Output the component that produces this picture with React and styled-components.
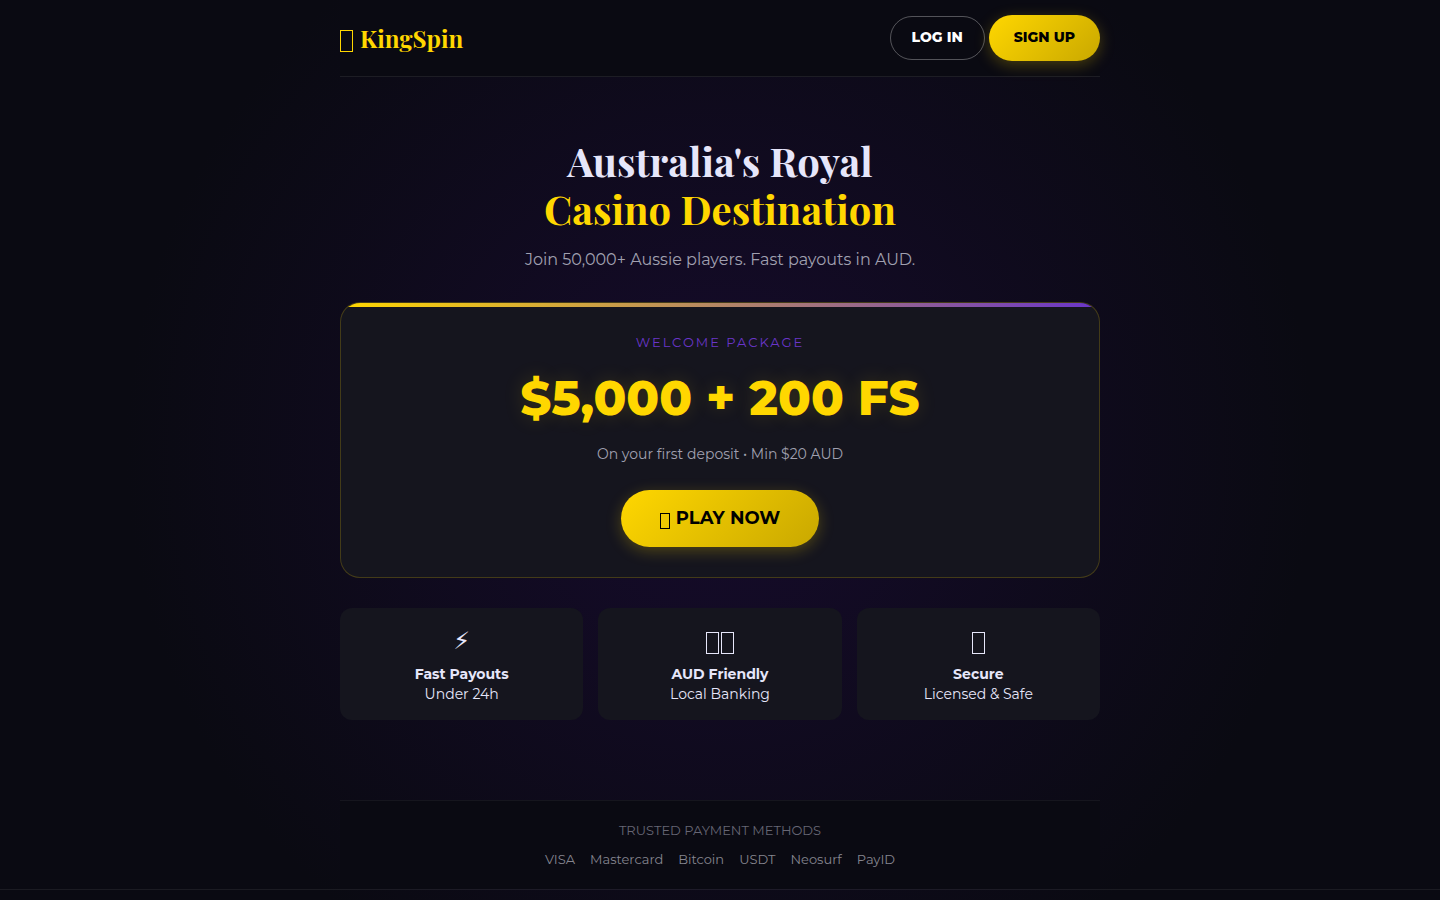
import React from "react";
import styled, { createGlobalStyle } from "styled-components";

const features = [
  { boxes: 0, title: "Fast Payouts", text: "Under 24h" },
  { boxes: 2, title: "AUD Friendly", text: "Local Banking" },
  { boxes: 1, title: "Secure", text: "Licensed & Safe" },
];

const payments = ["VISA", "Mastercard", "Bitcoin", "USDT", "Neosurf", "PayID"];

export default function App() {
  return (
    <>
      <GlobalStyle />
      <Page>
        <Container>
          <Header>
            <Logo href="#">
              <Box />
              KingSpin
            </Logo>
            <Actions>
              <Button $outline>Log in</Button>
              <Button>Sign up</Button>
            </Actions>
          </Header>
          <Hero>
            <h1>
              Australia's Royal
              <br />
              <span>Casino Destination</span>
            </h1>
            <p>Join 50,000+ Aussie players. Fast payouts in AUD.</p>
            <BonusCard>
              <div className="label">Welcome Package</div>
              <div className="amount">$5,000 + 200 FS</div>
              <div className="terms">On your first deposit • Min $20 AUD</div>
              <Button $large>
                <Box $small />
                Play now
              </Button>
            </BonusCard>
            <Features>
              {features.map((feature) => (
                <Feature key={feature.title}>
                  <div className="icon">
                    {feature.boxes === 0 && "⚡\uFE0E"}
                    {feature.boxes > 0 && <Box />}
                    {feature.boxes > 1 && <Box />}
                  </div>
                  <strong>{feature.title}</strong>
                  <span>{feature.text}</span>
                </Feature>
              ))}
            </Features>
          </Hero>
          <Payments>
            <h2>Trusted payment methods</h2>
            <ul>
              {payments.map((name) => (
                <li key={name}>{name}</li>
              ))}
            </ul>
          </Payments>
        </Container>
        <Footer />
      </Page>
    </>
  );
}

const GlobalStyle = createGlobalStyle`
  * {
    box-sizing: border-box;
    margin: 0;
    padding: 0;
  }
  body {
    background-color: #0a0a12;
    color: #e6e6fa;
    font-family: Montserrat, "Open Sans", sans-serif;
    font-size: 16px;
    line-height: 26px;
  }
`;

const Page = styled.div`
  min-height: 100vh;
  background: radial-gradient(circle at center, #160b2c 0%, #0a0a12 70%);
`;

const Container = styled.div`
  max-width: 800px;
  margin: 0 auto;
  padding: 0 20px;
`;

const Header = styled.header`
  display: flex;
  justify-content: space-between;
  align-items: center;
  padding: 15px 0;
  border-bottom: 1px solid rgba(255, 255, 255, 0.08);
  background: #0a0a12;
`;

const Box = styled.span`
  flex: none;
  width: ${(props) => (props.$small ? "10px" : "13px")};
  height: ${(props) => (props.$small ? "16px" : "22px")};
  margin-top: 4px;
  border: 1px solid currentColor;
`;

const Logo = styled.a`
  display: flex;
  align-items: center;
  gap: 7px;
  color: #ffd700;
  font-family: "Playfair Display", "Liberation Serif", serif;
  font-size: 24px;
  font-weight: 700;
  text-decoration: none;
  ${Box} {
    margin-top: 6px;
  }
`;

const Actions = styled.nav`
  display: flex;
  align-items: center;
  gap: 4px;
`;

const Button = styled.button`
  display: inline-flex;
  align-items: center;
  gap: 6px;
  border: ${(props) => (props.$outline ? "1px solid rgba(255, 255, 255, 0.3)" : "none")};
  border-radius: 50px;
  padding: ${(props) =>
    props.$large ? "16px 39px" : props.$outline ? "9px 21px 11px" : "11px 25px 13px"};
  background: ${(props) =>
    props.$outline ? "transparent" : "linear-gradient(135deg, #ffd700, #c9a800)"};
  box-shadow: ${(props) => (props.$outline ? "none" : "0 4px 15px rgba(255, 215, 0, 0.25)")};
  color: ${(props) => (props.$outline ? "#fff" : "#000")};
  font-family: inherit;
  font-size: ${(props) => (props.$large ? "18px" : "14px")};
  font-weight: ${(props) => (props.$large ? "700" : "800")};
  line-height: ${(props) => (props.$large ? "25px" : "22px")};
  text-transform: uppercase;
  cursor: pointer;
`;

const Hero = styled.main`
  padding: 60px 0 80px;
  text-align: center;
  h1 {
    margin-bottom: 14px;
    font-family: "Playfair Display", "Liberation Serif", serif;
    font-size: 40px;
    font-weight: 700;
    line-height: 48px;
    span {
      color: #ffd700;
    }
  }
  p {
    margin-bottom: 29px;
    color: #a0a0b0;
  }
`;

const BonusCard = styled.section`
  position: relative;
  overflow: hidden;
  margin-bottom: 30px;
  padding: 30px;
  border: 1px solid rgba(255, 215, 0, 0.2);
  border-radius: 20px;
  background: #15151e;
  &::before {
    content: "";
    position: absolute;
    top: 0;
    left: 0;
    right: 0;
    height: 4px;
    background: linear-gradient(90deg, #ffd700, #6a35c9);
  }
  .label {
    color: #6a35c9;
    font-size: 13px;
    letter-spacing: 2px;
    line-height: 18px;
    text-transform: uppercase;
  }
  .amount {
    margin: 7px 0 5px;
    color: #ffd700;
    font-size: 48px;
    font-weight: 800;
    line-height: 80px;
    text-shadow: 0 0 20px rgba(255, 215, 0, 0.15);
  }
  .terms {
    margin-bottom: 25px;
    color: #a0a0b0;
    font-size: 14px;
    line-height: 22px;
  }
  ${Button} {
    vertical-align: top;
  }
`;

const Features = styled.div`
  display: grid;
  grid-template-columns: repeat(3, 1fr);
  gap: 15px;
`;

const Feature = styled.div`
  display: flex;
  flex-direction: column;
  padding: 16px;
  border-radius: 12px;
  background: #15151e;
  font-size: 14px;
  line-height: 20px;
  .icon {
    display: flex;
    justify-content: center;
    align-items: center;
    gap: 2px;
    height: 40px;
    padding-bottom: 6px;
    font-family: "DejaVu Sans", sans-serif;
    font-size: 24px;
  }
  strong {
    font-weight: 700;
  }
`;

const Payments = styled.section`
  padding: 20px 0;
  border-top: 1px solid rgba(255, 255, 255, 0.05);
  background: #0a0a12;
  text-align: center;
  font-size: 13px;
  line-height: 20px;
  h2 {
    margin-bottom: 10px;
    color: #666674;
    font-size: 13px;
    font-weight: 400;
    line-height: 18px;
    text-transform: uppercase;
  }
  ul {
    display: flex;
    justify-content: center;
    gap: 15px;
    color: #85858f;
    list-style: none;
  }
`;

const Footer = styled.footer`
  border-top: 1px solid rgba(255, 255, 255, 0.07);
`;
